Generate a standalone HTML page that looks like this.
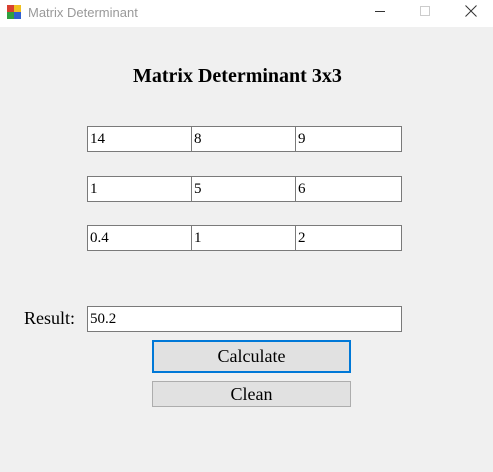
<!DOCTYPE html>
<html><head><meta charset="utf-8"><style>
*{margin:0;padding:0;box-sizing:border-box}
body{width:493px;height:472px;background:#f0f0f0;position:relative;overflow:hidden;font-family:"Liberation Serif",serif}
.tb{position:absolute;left:0;top:0;width:493px;height:27px;background:#fff}
.tt{position:absolute;left:28px;top:5px;font:13px "Liberation Sans",sans-serif;color:#999}
.abs{position:absolute}
.cell{position:absolute;height:26px;background:#fff;border:1px solid #7a7a7a;font-size:15px;line-height:24px;padding-left:2px;color:#000}
.btn{position:absolute;left:152px;width:199px;background:#e1e1e1;text-align:center;font-size:18px;color:#000}
</style></head><body>
<div class="tb">
 <svg class="abs" style="left:7px;top:5px" width="14" height="14">
  <rect x="0" y="0" width="7" height="7" fill="#d84030"/><rect x="7" y="0" width="7" height="7" fill="#f0c020"/>
  <rect x="0" y="7" width="7" height="7" fill="#30a040"/><rect x="7" y="7" width="7" height="7" fill="#3060d0"/>
 </svg>
 <div class="tt">Matrix Determinant</div>
 <div class="abs" style="left:375px;top:11px;width:10px;height:1px;background:#333"></div>
 <div class="abs" style="left:420px;top:6px;width:10px;height:10px;border:1px solid #ccc"></div>
 <svg class="abs" style="left:465px;top:5px" width="12" height="12"><path d="M0.5 0.5L11.5 11.5M11.5 0.5L0.5 11.5" stroke="#333" stroke-width="1"/></svg>
</div>
<div class="abs" style="left:133px;top:65px;font-weight:bold;font-size:20px;white-space:nowrap">Matrix Determinant 3x3</div>

<div class="cell" style="left:87px;top:126px;width:106px">14</div>
<div class="cell" style="left:191px;top:126px;width:106px">8</div>
<div class="cell" style="left:295px;top:126px;width:107px">9</div>

<div class="cell" style="left:87px;top:176px;width:106px">1</div>
<div class="cell" style="left:191px;top:176px;width:106px">5</div>
<div class="cell" style="left:295px;top:176px;width:107px">6</div>

<div class="cell" style="left:87px;top:225px;width:106px">0.4</div>
<div class="cell" style="left:191px;top:225px;width:106px">1</div>
<div class="cell" style="left:295px;top:225px;width:107px">2</div>

<div class="abs" style="left:24px;top:308px;font-size:18px">Result:</div>
<div class="cell" style="left:87px;top:306px;width:315px;height:26px">50.2</div>

<div class="btn" style="top:340px;height:33px;border:2px solid #0078d7;line-height:28px">Calculate</div>
<div class="btn" style="top:381px;height:26px;border:1px solid #adadad;line-height:24px">Clean</div>
</body></html>
